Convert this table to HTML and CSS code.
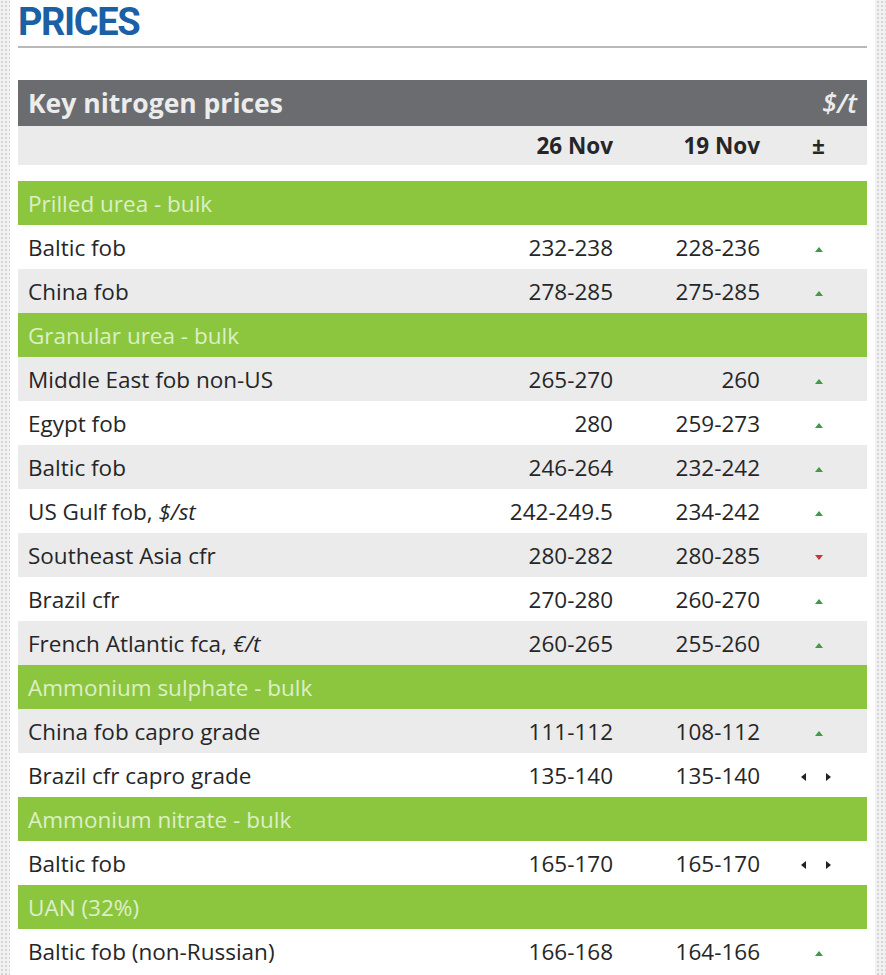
FILE: index.html
```html
<!DOCTYPE html>
<html>
<head>
<meta charset="utf-8">
<link rel="stylesheet" href="styles.css">
</head>
<body>
<div class="page">
  <div class="panel">
    <h1 class="title">PRICES</h1>
    <table class="prices">
      <colgroup>
        <col class="c-label">
        <col class="c-num">
        <col class="c-num">
        <col class="c-chg">
      </colgroup>
      <thead>
        <tr class="head">
          <th class="label" colspan="3">Key nitrogen prices</th>
          <th class="unit">$/t</th>
        </tr>
        <tr class="dates">
          <th class="label"></th>
          <th class="num">26 Nov</th>
          <th class="num">19 Nov</th>
          <th class="chg">±</th>
        </tr>
        <tr class="spacer"><td colspan="4"></td></tr>
      </thead>
      <tbody>
        <tr class="group"><td colspan="4">Prilled urea - bulk</td></tr>
        <tr class="w"><td class="label">Baltic fob</td><td class="num">232-238</td><td class="num">228-236</td><td class="chg"><span class="up"></span></td></tr>
        <tr class="g"><td class="label">China fob</td><td class="num">278-285</td><td class="num">275-285</td><td class="chg"><span class="up"></span></td></tr>
        <tr class="group"><td colspan="4">Granular urea - bulk</td></tr>
        <tr class="g"><td class="label">Middle East fob non-US</td><td class="num">265-270</td><td class="num">260</td><td class="chg"><span class="up"></span></td></tr>
        <tr class="w"><td class="label">Egypt fob</td><td class="num">280</td><td class="num">259-273</td><td class="chg"><span class="up"></span></td></tr>
        <tr class="g"><td class="label">Baltic fob</td><td class="num">246-264</td><td class="num">232-242</td><td class="chg"><span class="up"></span></td></tr>
        <tr class="w"><td class="label">US Gulf fob, <i>$/st</i></td><td class="num">242-249.5</td><td class="num">234-242</td><td class="chg"><span class="up"></span></td></tr>
        <tr class="g"><td class="label">Southeast Asia cfr</td><td class="num">280-282</td><td class="num">280-285</td><td class="chg"><span class="down"></span></td></tr>
        <tr class="w"><td class="label">Brazil cfr</td><td class="num">270-280</td><td class="num">260-270</td><td class="chg"><span class="up"></span></td></tr>
        <tr class="g"><td class="label">French Atlantic fca, <i>€/t</i></td><td class="num">260-265</td><td class="num">255-260</td><td class="chg"><span class="up"></span></td></tr>
        <tr class="group"><td colspan="4">Ammonium sulphate - bulk</td></tr>
        <tr class="g"><td class="label">China fob capro grade</td><td class="num">111-112</td><td class="num">108-112</td><td class="chg"><span class="up"></span></td></tr>
        <tr class="w"><td class="label">Brazil cfr capro grade</td><td class="num">135-140</td><td class="num">135-140</td><td class="chg"><span class="flat"><span class="left"></span><span class="right"></span></span></td></tr>
        <tr class="group"><td colspan="4">Ammonium nitrate - bulk</td></tr>
        <tr class="w"><td class="label">Baltic fob</td><td class="num">165-170</td><td class="num">165-170</td><td class="chg"><span class="flat"><span class="left"></span><span class="right"></span></span></td></tr>
        <tr class="group"><td colspan="4">UAN (32%)</td></tr>
        <tr class="w"><td class="label">Baltic fob (non-Russian)</td><td class="num">166-168</td><td class="num">164-166</td><td class="chg"><span class="up"></span></td></tr>
      </tbody>
    </table>
  </div>
</div>
</body>
</html>
```

FILE: styles.css
```css
html, body {
  margin: 0;
  padding: 0;
}
body {
  background: #f1f1f1;
  font-family: "Open Sans", "DejaVu Sans", sans-serif;
  color: #262628;
}
.page {
  padding: 0 11px 0 10px;
  background-image: radial-gradient(#d6d6d6 1px, transparent 1.2px);
  background-size: 4px 4px;
  min-height: 975px;
}
.panel {
  background: #fff;
  padding: 0 8px 0 8px;
  min-height: 975px;
  box-sizing: border-box;
}
.title {
  margin: 0 0 32px 0;
  height: 46px;
  font-family: Roboto, "Open Sans", sans-serif;
  font-size: 38px;
  line-height: normal;
  font-weight: 700;
  color: #1b5fa5;
  letter-spacing: -1.4px;
  border-bottom: 2px solid #b9b9b9;
}
.prices {
  width: 100%;
  table-layout: fixed;
  border-collapse: collapse;
  font-size: 22.5px;
}
.c-num {
  width: 147px;
}
.c-chg {
  width: 107px;
}
.prices th, .prices td {
  padding: 0;
}
.head th {
  background: #6b6c6f;
  color: #ececec;
  height: 46px;
  font-size: 26.5px;
  font-weight: 700;
  text-align: left;
}
.head .label {
  padding-left: 10px;
}
.head .unit {
  text-align: right;
  padding-right: 10px;
  font-style: italic;
  font-weight: 600;
}
.dates th {
  background: #ebebeb;
  height: 39px;
  font-weight: 700;
  font-size: 22.5px;
}
.spacer td {
  height: 16px;
  background: #fff;
}
.prices .num {
  text-align: right;
  white-space: nowrap;
}
.prices .chg {
  text-align: center;
}
.group td {
  background: #8cc63f;
  color: #dcefc7;
  height: 44px;
  padding-left: 10px;
}
.w td {
  background: #fff;
  height: 44px;
}
.g td {
  background: #ebebeb;
  height: 44px;
}
.label {
  text-align: left;
}
.prices .label {
  padding-left: 10px;
  white-space: nowrap;
}
.dates .chg {
  padding-left: 10px;
}
.up {
  display: inline-block;
  width: 0;
  height: 0;
  border-left: 4px solid transparent;
  border-right: 4px solid transparent;
  border-bottom: 5px solid #3f9a45;
  vertical-align: middle;
  margin-left: 10px;
}
.down {
  display: inline-block;
  width: 0;
  height: 0;
  border-left: 4px solid transparent;
  border-right: 4px solid transparent;
  border-top: 5px solid #c8343a;
  vertical-align: middle;
  margin-left: 10px;
}
.flat {
  display: inline-flex;
  gap: 20px;
  align-items: center;
  vertical-align: middle;
  margin-left: 5px;
}
.left {
  width: 0;
  height: 0;
  border-top: 4px solid transparent;
  border-bottom: 4px solid transparent;
  border-right: 5px solid #222;
}
.right {
  width: 0;
  height: 0;
  border-top: 4px solid transparent;
  border-bottom: 4px solid transparent;
  border-left: 5px solid #222;
}
```
